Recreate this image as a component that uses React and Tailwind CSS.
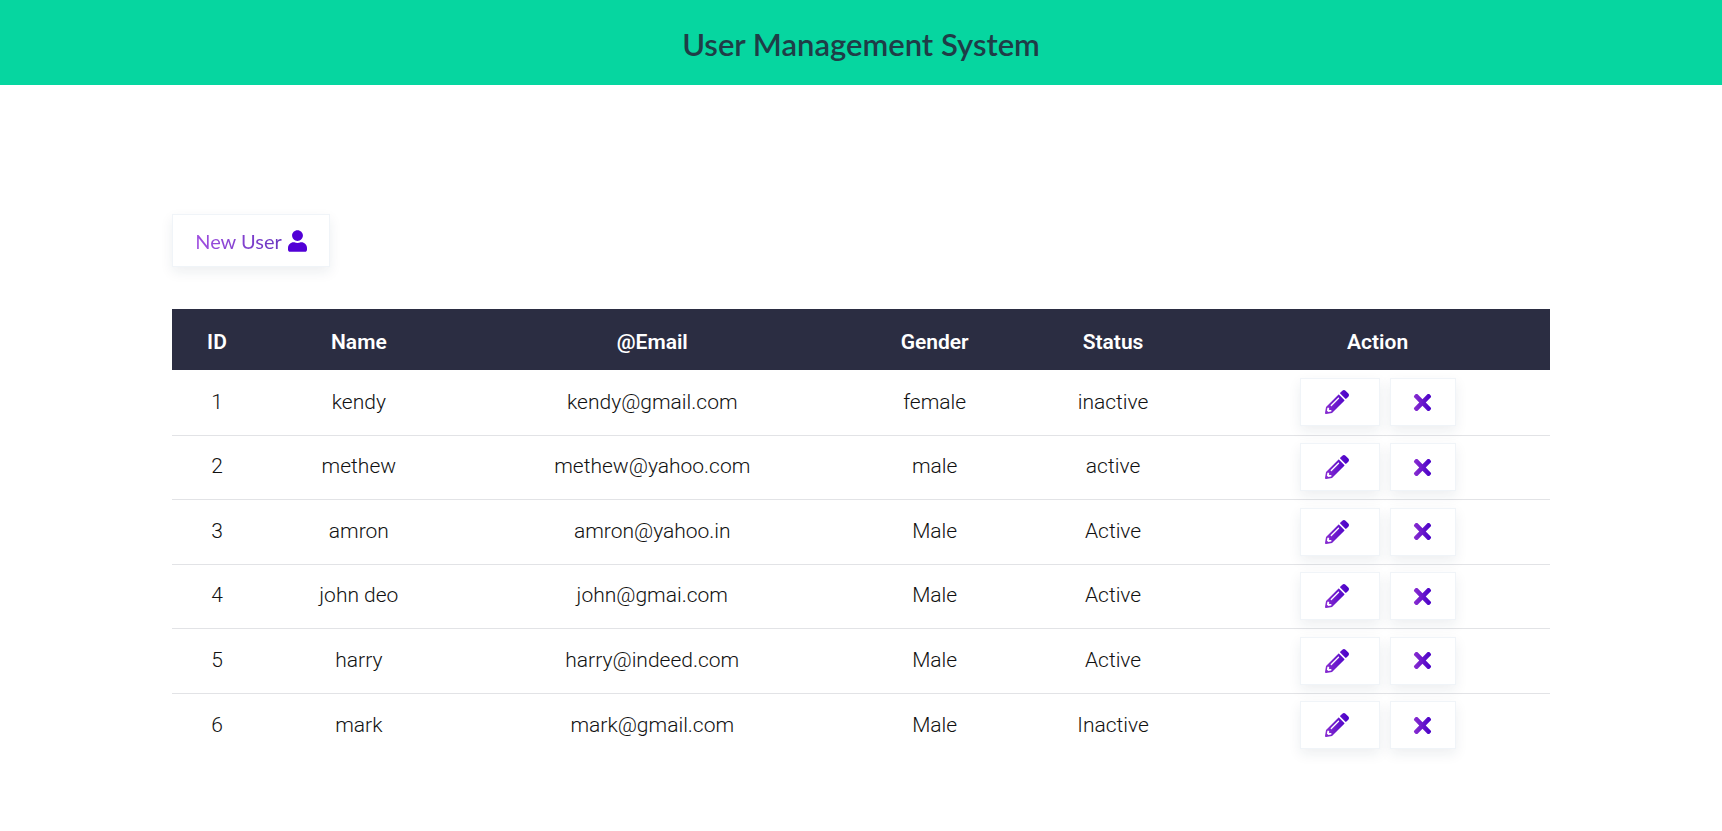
import { FaPencilAlt, FaTimes, FaUser } from "react-icons/fa";

const users = [
  { id: 1, name: "kendy", email: "kendy@gmail.com", gender: "female", status: "inactive" },
  { id: 2, name: "methew", email: "methew@yahoo.com", gender: "male", status: "active" },
  { id: 3, name: "amron", email: "amron@yahoo.in", gender: "Male", status: "Active" },
  { id: 4, name: "john deo", email: "john@gmai.com", gender: "Male", status: "Active" },
  { id: 5, name: "harry", email: "harry@indeed.com", gender: "Male", status: "Active" },
  { id: 6, name: "mark", email: "mark@gmail.com", gender: "Male", status: "Inactive" },
];

const box = "border border-[#f0f4f8] bg-white shadow-[0_5px_12px_rgba(30,50,80,0.08)]";

export default function App() {
  return (
    <div className="min-h-screen bg-white pb-18 font-['Roboto',sans-serif] text-[#111111]">
      <svg className="absolute h-0 w-0" aria-hidden="true">
        <defs>
          <linearGradient id="violet" x1="0" y1="0" x2="1" y2="0">
            <stop offset="0" stopColor="#8a2ed0" />
            <stop offset="1" stopColor="#4800c8" />
          </linearGradient>
        </defs>
      </svg>
      <header className="flex h-[85px] items-center justify-center bg-[#06d6a0]">
        <h1 className="pt-[2px] font-['Lato',sans-serif] text-[31px] leading-10 font-semibold text-[#1f3d47]">
          User Management System
        </h1>
      </header>
      <main className="mx-auto w-4/5 pt-[129px]">
        <a href="#new" className={`inline-flex h-[53px] items-center gap-[6px] px-[22px] ${box}`}>
          <span className="bg-gradient-to-r from-[#a04ee0] to-[#6a35c0] bg-clip-text font-['Lato',sans-serif] text-xl text-transparent">
            New User
          </span>
          <FaUser className="h-[22px] w-[19px] text-[#5200d6]" aria-hidden="true" />
        </a>
        <table className="mt-[42px] w-full table-fixed border-collapse text-center text-[21px]">
          <colgroup>
            <col className="w-[6.5%]" />
            <col className="w-[14.1%]" />
            <col className="w-[28.5%]" />
            <col className="w-[12.5%]" />
            <col className="w-[13.4%]" />
            <col />
          </colgroup>
          <thead>
            <tr className="h-[61px] bg-[#2b2d42] text-white">
              {["ID", "Name", "@Email", "Gender", "Status", "Action"].map((label) => (
                <th key={label} scope="col" className="pt-[6px] font-semibold">{label}</th>
              ))}
            </tr>
          </thead>
          <tbody>
            {users.map((user) => (
              <tr key={user.id} className="border-b border-[#e2e3e6] font-light last:border-0 odd:h-[65px] even:h-16">
                <td>{user.id}</td>
                <td>{user.name}</td>
                <td>{user.email}</td>
                <td>{user.gender}</td>
                <td>{user.status}</td>
                <td>
                  <div className="flex justify-center gap-[10px]">
                    <a href={`#edit-${user.id}`} aria-label={`Edit ${user.name}`} className={`flex h-12 w-20 items-center pl-6 ${box}`}>
                      <FaPencilAlt className="size-6" fill="url(#violet)" />
                    </a>
                    <button type="button" aria-label={`Delete ${user.name}`} className={`flex h-12 w-[66px] items-center justify-center ${box}`}>
                      <FaTimes className="size-[25px]" fill="url(#violet)" />
                    </button>
                  </div>
                </td>
              </tr>
            ))}
          </tbody>
        </table>
      </main>
    </div>
  );
}
